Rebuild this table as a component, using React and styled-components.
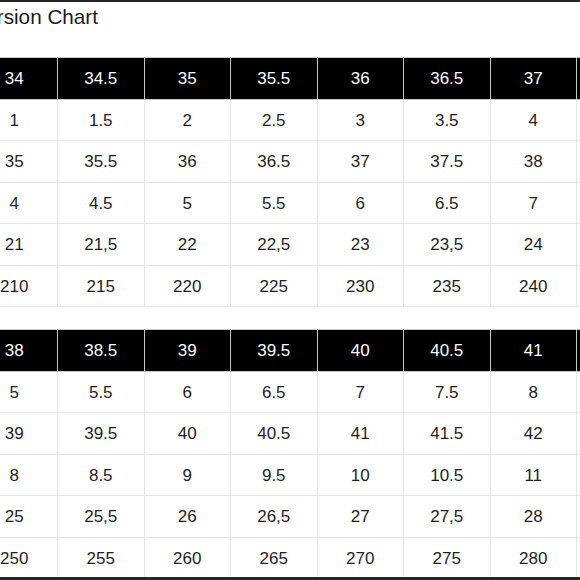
import React from 'react'
import styled, { createGlobalStyle } from 'styled-components'

const GlobalStyle = createGlobalStyle`
  html, body {
    margin: 0;
    padding: 0;
    background: #fff;
    overflow: hidden;
  }
  body {
    font-family: "Liberation Sans", Arial, sans-serif;
  }
`

const charts = [
  {
    head: ['34', '34.5', '35', '35.5', '36', '36.5', '37', '37.5'],
    rows: [
      ['1', '1.5', '2', '2.5', '3', '3.5', '4', '4.5'],
      ['35', '35.5', '36', '36.5', '37', '37.5', '38', '38.5'],
      ['4', '4.5', '5', '5.5', '6', '6.5', '7', '7.5'],
      ['21', '21,5', '22', '22,5', '23', '23,5', '24', '24,5'],
      ['210', '215', '220', '225', '230', '235', '240', '245'],
    ],
  },
  {
    head: ['38', '38.5', '39', '39.5', '40', '40.5', '41', '41.5'],
    rows: [
      ['5', '5.5', '6', '6.5', '7', '7.5', '8', '8.5'],
      ['39', '39.5', '40', '40.5', '41', '41.5', '42', '42.5'],
      ['8', '8.5', '9', '9.5', '10', '10.5', '11', '11.5'],
      ['25', '25,5', '26', '26,5', '27', '27,5', '28', '28,5'],
      ['250', '255', '260', '265', '270', '275', '280', '285'],
    ],
  },
]

const App = () => {
  return (
    <>
      <GlobalStyle />
      <Frame>
        <Title>Size Conversion Chart</Title>
        {charts.map((chart, i) => (
          <Table key={i} $first={i === 0}>
            <colgroup>
              {chart.head.map((h) => <col key={h} />)}
            </colgroup>
            <thead>
              <tr>
                {chart.head.map((h) => <Head key={h}>{h}</Head>)}
              </tr>
            </thead>
            <tbody>
              {chart.rows.map((row, r) => (
                <tr key={r}>
                  {row.map((v, c) => <Cell key={c}>{v}</Cell>)}
                </tr>
              ))}
            </tbody>
          </Table>
        ))}
      </Frame>
    </>
  )
}

const Frame = styled.div`
  width: 580px;
  height: 575px;
  border-top: 2px solid #262626;
  border-bottom: 3px solid #262626;
  overflow: hidden;
  background: #fff;
`

const Title = styled.h1`
  margin: 3px 0 0 -109px;
  font-size: 20.7px;
  line-height: 24px;
  font-weight: 400;
  color: #1a1a1a;
  white-space: nowrap;
  height: 52px;
`

const Table = styled.table`
  margin: ${(p) => (p.$first ? '0' : '22px')} 0 0 -29.5px;
  border-collapse: collapse;
  table-layout: fixed;
  width: 692px;

  col {
    width: 86.5px;
  }
`

const Head = styled.th`
  height: 38.5px;
  padding: 2px 0 0;
  background: #000;
  color: #fff;
  border: 1px solid #c8c8c8;
  font-size: 17px;
  font-weight: 400;
  text-align: center;
`

const Cell = styled.td`
  height: 38.5px;
  padding: 2px 0 0;
  border: 1px solid #e4e4e4;
  color: #1e1e1e;
  font-size: 17px;
  text-align: center;
`

export default App
